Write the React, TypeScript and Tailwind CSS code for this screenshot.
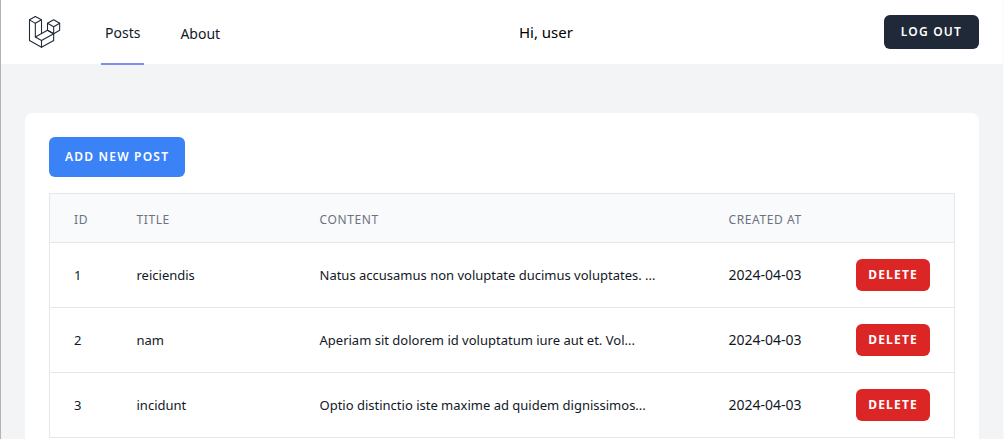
const posts = [
  { id: 1, title: 'reiciendis', content: 'Natus accusamus non voluptate ducimus voluptates. ...', createdAt: '2024-04-03' },
  { id: 2, title: 'nam', content: 'Aperiam sit dolorem id voluptatum iure aut et. Vol...', createdAt: '2024-04-03' },
  { id: 3, title: 'incidunt', content: 'Optio distinctio iste maxime ad quidem dignissimos...', createdAt: '2024-04-03' },
]

const columns = [
  { label: 'ID', width: 'w-[63px]' },
  { label: 'Title', width: 'w-[183px]' },
  { label: 'Content', width: 'w-auto' },
  { label: 'Created at', width: 'w-[126px]' },
  { label: '', width: 'w-[124px]' },
]

function Logo() {
  return (
    <svg
      viewBox="0 0 108 108"
      className="h-9 w-9 text-[#1f2937]"
      fill="none"
      stroke="currentColor"
      strokeWidth="3.2"
      strokeLinejoin="round"
      strokeLinecap="round"
      aria-hidden="true"
    >
      <path d="M31 7.5 13.5 17.5v62L49.5 100 86 79.5V59" />
      <path d="M31 7.5 49.5 17.5 31 28 13.5 17.5" />
      <path d="M31 28v41l18.5 10.5V100" />
      <path d="M49.5 17.5V58" />
      <path d="M31 69 67.5 48.5 86 59 49.5 79.5" />
      <path d="M86 17.5 104 28v20.5L86 59 67.5 48.5V28z" />
      <path d="M67.5 28 86 38.5 104 28M86 38.5V59" />
    </svg>
  )
}

function Navigation() {
  return (
    <nav className="bg-white border-b border-[#f3f4f6]">
      <div className="flex justify-between h-16 px-6">
        <div className="flex">
          <a href="#" aria-label="Home" className="flex items-center shrink-0">
            <Logo />
          </a>
          <div className="flex -my-px ml-10 space-x-8">
            <a
              href="#posts"
              className="inline-flex items-center px-1 pt-1 border-b-2 border-[#818cf8] text-sm text-[#111827]"
            >
              Posts
            </a>
            <a href="#about" className="inline-flex items-center px-1 pt-1 text-sm text-[#111827]">
              About
            </a>
          </div>
        </div>
        <div className="flex items-center pr-4 text-[15px] text-black">Hi, user</div>
        <div className="flex items-center">
          <button
            type="button"
            className="px-4 py-2 bg-[#1f2937] border border-transparent rounded-md text-xs font-semibold text-white uppercase tracking-widest"
          >
            Log out
          </button>
        </div>
      </div>
    </nav>
  )
}

function PostsTable() {
  return (
    <table className="w-full table-fixed border border-[#e5e7eb]">
      <thead>
        <tr className="bg-[#f9fafb]">
          {columns.map((column) => (
            <th
              key={column.label}
              className={`${column.width} h-[49px] px-6 pt-1 text-left text-xs font-normal uppercase tracking-wider text-[#6b7280]`}
            >
              {column.label}
            </th>
          ))}
        </tr>
      </thead>
      <tbody>
        {posts.map((post) => (
          <tr key={post.id} className="border-t border-[#e5e7eb] text-[13px] leading-5 text-[#111827] whitespace-nowrap">
            <td className="px-6 py-4">{post.id}</td>
            <td className="px-6 py-4">{post.title}</td>
            <td className="px-6 py-4">{post.content}</td>
            <td className="px-6 py-4 text-sm">{post.createdAt}</td>
            <td className="px-6 py-4">
              <button
                type="button"
                className="block ml-auto px-3 py-2 bg-[#dc2626] rounded-md text-xs font-bold text-white uppercase tracking-widest"
              >
                Delete
              </button>
            </td>
          </tr>
        ))}
      </tbody>
    </table>
  )
}

export default function App() {
  return (
    <div className="h-screen overflow-hidden bg-[#f3f4f6] border-l border-l-[#b4b4b4] border-r border-r-[#f9fafb] font-['Noto_Sans',sans-serif]">
      <Navigation />
      <main className="px-6 py-12">
        <div className="p-6 bg-white rounded-lg">
          <a
            href="#create"
            className="inline-block mb-4 px-4 py-3 bg-[#3b82f6] rounded-md text-xs font-semibold text-white uppercase tracking-widest"
          >
            Add new post
          </a>
          <PostsTable />
        </div>
      </main>
    </div>
  )
}
